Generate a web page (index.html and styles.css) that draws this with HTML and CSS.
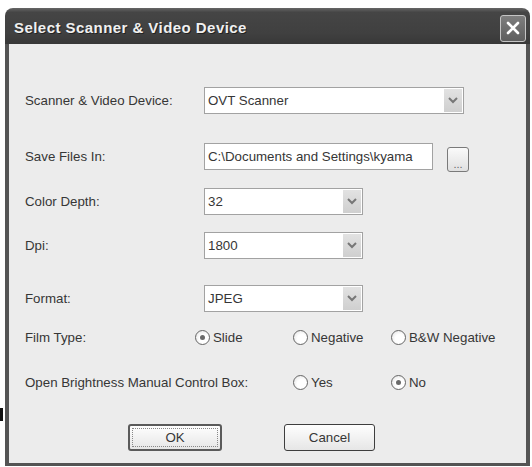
FILE: index.html
```html
<!DOCTYPE html>
<html lang="en">
<head>
    <meta charset="UTF-8">
    <meta name="viewport" content="width=device-width, initial-scale=1.0">
    <title>Select Scanner &amp; Video Device</title>
    <link rel="stylesheet" href="styles.css">
</head>
<body>
    <div class="page">
        <div class="speck"></div>
        <div class="dialog">
            <div class="titlebar">
                <span class="title">Select Scanner &amp; Video Device</span>
                <div class="close">
                    <svg width="16" height="16" viewBox="0 0 16 16">
                        <path d="M3 3 L13 13 M13 3 L3 13" stroke="#fff" stroke-width="2.6" stroke-linecap="round"/>
                    </svg>
                </div>
            </div>
            <div class="body">
                <div class="form">
                    <div class="label">Scanner &amp; Video Device:</div>
                    <div class="select wide">
                        <span class="value">OVT Scanner</span>
                        <span class="arrow"><svg width="10" height="7" viewBox="0 0 10 7"><polyline points="1,1 5,5 9,1" fill="none" stroke="#777" stroke-width="2"/></svg></span>
                    </div>

                    <div class="label">Save Files In:</div>
                    <div class="path-row">
                        <div class="textbox">C:\Documents and Settings\kyama</div>
                        <div class="browse">...</div>
                    </div>

                    <div class="label">Color Depth:</div>
                    <div class="select">
                        <span class="value">32</span>
                        <span class="arrow"><svg width="10" height="7" viewBox="0 0 10 7"><polyline points="1,1 5,5 9,1" fill="none" stroke="#777" stroke-width="2"/></svg></span>
                    </div>

                    <div class="label">Dpi:</div>
                    <div class="select">
                        <span class="value">1800</span>
                        <span class="arrow"><svg width="10" height="7" viewBox="0 0 10 7"><polyline points="1,1 5,5 9,1" fill="none" stroke="#777" stroke-width="2"/></svg></span>
                    </div>

                    <div class="label">Format:</div>
                    <div class="select">
                        <span class="value">JPEG</span>
                        <span class="arrow"><svg width="10" height="7" viewBox="0 0 10 7"><polyline points="1,1 5,5 9,1" fill="none" stroke="#777" stroke-width="2"/></svg></span>
                    </div>

                    <div class="label">Film Type:</div>
                    <div class="radios">
                        <div class="radio"><span class="dot checked"></span>Slide</div>
                        <div class="radio"><span class="dot"></span>Negative</div>
                        <div class="radio"><span class="dot"></span>B&amp;W Negative</div>
                    </div>

                    <div class="label">Open Brightness Manual Control Box:</div>
                    <div class="radios">
                        <div class="radio skip"><span class="dot"></span>Yes</div>
                        <div class="radio"><span class="dot checked"></span>No</div>
                    </div>
                </div>
                <div class="buttons">
                    <div class="btn default">OK</div>
                    <div class="btn">Cancel</div>
                </div>
            </div>
        </div>
    </div>
</body>
</html>
```

FILE: styles.css
```css
body {
    margin: 0;
    background: #fff;
    font-family: "Liberation Sans", Arial, sans-serif;
    font-size: 13.3px;
    color: #363636;
}
.page {
    display: flex;
    align-items: flex-start;
    padding-top: 8px;
}
.speck {
    width: 3px;
    height: 13px;
    margin-top: 400px;
    margin-right: 2px;
    background: #111;
}
.dialog {
    width: 525px;
    height: 458px;
    display: flex;
    flex-direction: column;
}
.titlebar {
    height: 36px;
    display: flex;
    align-items: center;
    justify-content: space-between;
    padding: 0 4px 0 9px;
    background: linear-gradient(#666 0%, #454545 12%, #404040 70%, #383838 100%);
    border-radius: 8px 8px 0 0;
}
.title {
    color: #f0f0f0;
    font-weight: bold;
    font-size: 15px;
    letter-spacing: 0.45px;
    text-shadow: 1px 1px 0 #222;
    margin-top: 2px;
}
.close {
    width: 24px;
    height: 25px;
    margin-top: 4px;
    border: 1px solid #c4c4c4;
    border-radius: 3px;
    background: linear-gradient(#7e7e7e, #5e5e5e);
    display: flex;
    align-items: center;
    justify-content: center;
}
.body {
    flex: 1;
    background: #ececec;
    border: 4px solid #545454;
    border-top: none;
    border-bottom-width: 3px;
    padding: 43px 16px 0 16px;
}
.form {
    display: grid;
    grid-template-columns: 179px 1fr;
    grid-template-rows: 56px 45px 44px 53px 39px 45px 55px;
}
.label {
    height: 27px;
    display: flex;
    align-items: center;
    white-space: nowrap;
}
.select {
    width: 157px;
    height: 25px;
    display: flex;
    align-items: stretch;
    background: #fff;
    border: 1px solid #a2a2a2;
}
.select.wide {
    width: 258px;
}
.value {
    flex: 1;
    display: flex;
    align-items: center;
    padding-left: 3px;
}
.arrow {
    width: 18px;
    margin: 1px;
    background: linear-gradient(#e2e2e2, #cfcfcf);
    display: flex;
    align-items: center;
    justify-content: center;
}
.path-row {
    display: flex;
    align-items: flex-start;
}
.textbox {
    width: 224px;
    height: 25px;
    display: flex;
    align-items: center;
    padding-left: 3px;
    background: #fff;
    border: 1px solid #a2a2a2;
    white-space: nowrap;
    overflow: hidden;
}
.browse {
    width: 20px;
    height: 23px;
    margin: 4px 0 0 14px;
    border: 1px solid #7a7a7a;
    border-radius: 3px;
    background: linear-gradient(#fafafa, #e0e0e0);
    display: flex;
    align-items: flex-end;
    justify-content: center;
    font-size: 11px;
    line-height: 14px;
    color: #666;
}
.radios {
    display: grid;
    grid-template-columns: 98px 98px auto;
    margin-left: -9px;
    height: 27px;
}
.radio {
    display: flex;
    align-items: center;
    gap: 3px;
    white-space: nowrap;
}
.radio.skip {
    grid-column-start: 2;
}
.dot {
    width: 13px;
    height: 13px;
    border: 1.5px solid #666;
    border-radius: 50%;
    background: radial-gradient(circle at 60% 60%, #fff 40%, #dedede 100%);
    display: flex;
    align-items: center;
    justify-content: center;
}
.dot.checked::after {
    content: "";
    width: 5px;
    height: 5px;
    border-radius: 50%;
    background: #6a6a6a;
}
.buttons {
    display: flex;
    gap: 62px;
    padding-left: 103px;
}
.btn {
    width: 89px;
    height: 25px;
    display: flex;
    align-items: center;
    justify-content: center;
    border: 1px solid #3e3e3e;
    border-radius: 3px;
    background: linear-gradient(#fefefe, #e6e6e6);
}
.btn.default {
    width: 90px;
    height: 23px;
    border: 2px solid #5a5a5a;
    outline: 1px dotted #888;
    outline-offset: -5px;
}
```
